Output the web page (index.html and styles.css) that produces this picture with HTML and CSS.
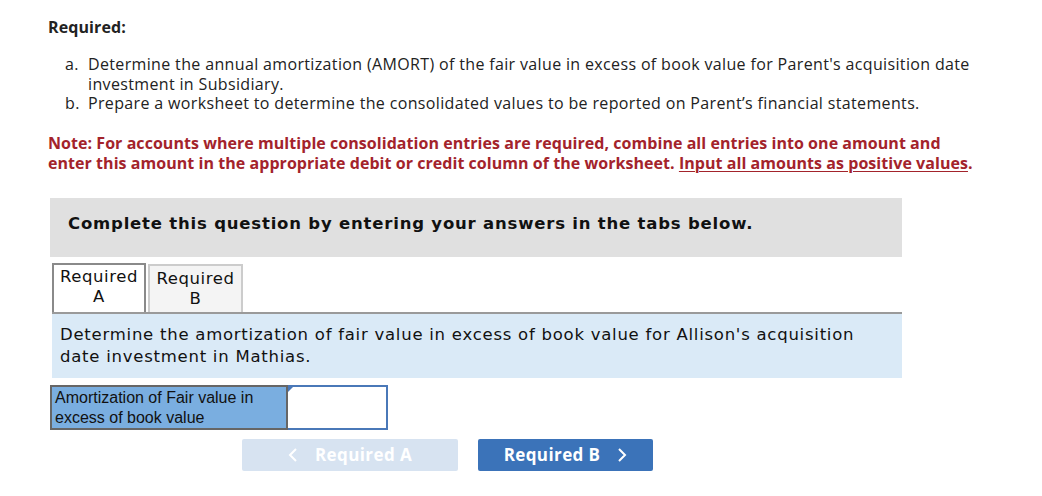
FILE: index.html
```html
<!DOCTYPE html>
<html>
<head>
<meta charset="utf-8">
<link rel="stylesheet" href="styles.css">
</head>
<body>
<div class="page">
  <div class="req-title">Required:</div>
  <ol class="req-list">
    <li><span class="mk">a.</span><span>Determine the annual amortization (AMORT) of the fair value in excess of book value for Parent's acquisition date investment in Subsidiary.</span></li>
    <li><span class="mk">b.</span><span>Prepare a worksheet to determine the consolidated values to be reported on Parent’s financial statements.</span></li>
  </ol>
  <p class="note">Note: For accounts where multiple consolidation entries are required, combine all entries into one amount and enter this amount in the appropriate debit or credit column of the worksheet. <u>Input all amounts as positive values</u>.</p>

  <div class="panel">Complete this question by entering your answers in the tabs below.</div>

  <div class="tabs">
    <div class="tab active">Required<br>A</div>
    <div class="tab">Required<br>B</div>
  </div>
  <div class="tab-body">Determine the amortization of fair value in excess of book value for Allison's acquisition date investment in Mathias.</div>

  <table class="amort">
    <tr>
      <td class="lbl">Amortization of Fair value in excess of book value</td>
      <td class="inp"><span class="corner"></span></td>
    </tr>
  </table>

  <div class="nav">
    <button class="btn prev"><svg class="chev" width="10" height="16" viewBox="0 0 10 16"><path d="M8 2 L2 8 L8 14" fill="none" stroke="#fff" stroke-width="2"/></svg>Required A</button>
    <button class="btn next">Required B<svg class="chev r" width="10" height="16" viewBox="0 0 10 16"><path d="M2 2 L8 8 L2 14" fill="none" stroke="#fff" stroke-width="2"/></svg></button>
  </div>
</div>
</body>
</html>
```
FILE: styles.css
```css
body {
  margin: 0;
  background: #fff;
  font-family: "Open Sans", "Noto Sans", sans-serif;
  color: #222;
}
.page {
  padding: 17px 0 0 48px;
  width: 952px;
}
.req-title {
  font-weight: 700;
  font-size: 16px;
  letter-spacing: 0.1px;
  line-height: 20px;
  color: #222;
}
.req-list {
  list-style: none;
  margin: 18px 0 0 0;
  padding: 0 0 0 17px;
  font-size: 16px;
  letter-spacing: 0.35px;
  line-height: 19.5px;
}
.req-list li {
  display: flex;
}
.req-list .mk {
  width: 23px;
  flex: none;
}
.note {
  margin: 19px 0 0 0;
  width: 930px;
  color: #a3232b;
  font-weight: 700;
  font-size: 16px;
  letter-spacing: 0.05px;
  line-height: 20px;
}
.note u {
  text-decoration-thickness: 1px;
  text-underline-offset: 2px;
}
.panel {
  margin: 25px 0 0 2px;
  width: 852px;
  height: 59px;
  box-sizing: border-box;
  background: #e0e0e0;
  padding: 15px 18px;
  font-family: "DejaVu Sans", Verdana, sans-serif;
  font-weight: 700;
  font-size: 16.5px;
  letter-spacing: 0.8px;
  line-height: 22px;
  color: #111;
}
.tabs {
  display: flex;
  margin: 6px 0 0 4px;
  gap: 2px;
  align-items: flex-end;
}
.tab {
  font-family: "DejaVu Sans", Verdana, sans-serif;
  font-size: 16.5px;
  letter-spacing: 0.6px;
  line-height: 20px;
  text-align: center;
  color: #111;
  box-sizing: border-box;
  border: 2px solid #ccc;
  border-bottom: none;
  background: #f4f4f4;
  width: 95px;
  height: 48px;
  padding-top: 3px;
}
.tab.active {
  background: #fff;
  border-color: #8a8a8a;
  width: 94px;
  height: 49px;
  padding-top: 2px;
}
.tab-body {
  margin-left: 4px;
  width: 850px;
  box-sizing: border-box;
  background: #daeaf7;
  border-top: 2px solid #9a9a9a;
  padding: 10px 8px 10px 8px;
  font-family: "DejaVu Sans", Verdana, sans-serif;
  font-size: 16.5px;
  letter-spacing: 0.75px;
  line-height: 22px;
  color: #111;
}
.amort {
  margin: 7px 0 0 2px;
  border-collapse: collapse;
  border: 2px solid #666;
}
.amort td {
  padding: 0;
}
.amort .lbl {
  background: #7aaee0;
  width: 236px;
  height: 40px;
  box-sizing: border-box;
  padding: 1px 2px 0 3px;
  font-family: "Liberation Sans", Arial, sans-serif;
  font-size: 16px;
  line-height: 20px;
  color: #111;
  vertical-align: top;
  border-right: 2px solid #666;
}
.amort .inp {
  width: 98px;
  background: #fff;
  border: 2px solid #4a78b8;
  position: relative;
}
.corner {
  position: absolute;
  left: 0;
  top: 0;
  width: 0;
  height: 0;
  border-top: 5px solid #4a78b8;
  border-right: 5px solid transparent;
}
.nav {
  display: flex;
  gap: 20px;
  margin: 9px 0 0 194px;
}
.btn {
  height: 32px;
  border: none;
  border-radius: 2px;
  font-family: "Open Sans", "Noto Sans", sans-serif;
  font-weight: 700;
  font-size: 17px;
  letter-spacing: 0.4px;
  color: #fff;
  display: flex;
  align-items: center;
  justify-content: center;
  padding: 0;
}
.btn.prev {
  width: 216px;
  background: #d7e3f1;
}
.btn.next {
  width: 175px;
  background: #3b73b9;
}
.chev {
  margin-right: 17px;
}
.chev.r {
  margin-right: 0;
  margin-left: 17px;
}
```
